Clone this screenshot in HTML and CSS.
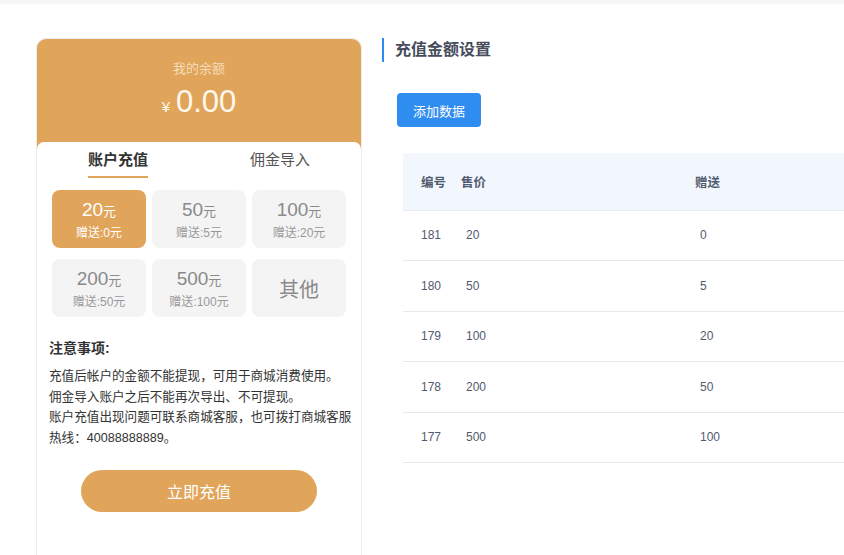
FILE: index.html
```html
<!DOCTYPE html>
<html lang="zh">
<head>
<meta charset="utf-8">
<title>充值金额设置</title>
<link rel="stylesheet" href="styles.css">
</head>
<body>
<div class="topbar"></div>
<div class="main">
  <div class="card">
    <div class="balance">
      <div class="balance-label">我的余额</div>
      <div class="balance-amount"><span class="yen">¥</span><span class="num">0.00</span></div>
    </div>
    <div class="panel">
      <div class="tabs">
        <div class="tab active"><span>账户充值</span></div>
        <div class="tab"><span>佣金导入</span></div>
      </div>
      <div class="amounts">
        <div class="amt selected"><div class="amt-main">20<small>元</small></div><div class="amt-sub">赠送:0元</div></div>
        <div class="amt"><div class="amt-main">50<small>元</small></div><div class="amt-sub">赠送:5元</div></div>
        <div class="amt"><div class="amt-main">100<small>元</small></div><div class="amt-sub">赠送:20元</div></div>
        <div class="amt"><div class="amt-main">200<small>元</small></div><div class="amt-sub">赠送:50元</div></div>
        <div class="amt"><div class="amt-main">500<small>元</small></div><div class="amt-sub">赠送:100元</div></div>
        <div class="amt other">其他</div>
      </div>
      <div class="notes">
        <div class="notes-title">注意事项:</div>
        <p>充值后帐户的金额不能提现，可用于商城消费使用。</p>
        <p>佣金导入账户之后不能再次导出、不可提现。</p>
        <p>账户充值出现问题可联系商城客服，也可拨打商城客服热线：40088888889。</p>
      </div>
      <div class="btn-wrap"><button class="recharge">立即充值</button></div>
    </div>
  </div>
  <div class="content">
    <div class="title">充值金额设置</div>
    <button class="add-btn">添加数据</button>
    <table class="grid">
      <colgroup><col class="c1"><col class="c2"><col class="c3"></colgroup>
      <thead>
        <tr><th class="h1">编号</th><th class="h2">售价</th><th class="h3">赠送</th></tr>
      </thead>
      <tbody>
        <tr><td class="d1">181</td><td class="d2">20</td><td class="d3">0</td></tr>
        <tr><td class="d1">180</td><td class="d2">50</td><td class="d3">5</td></tr>
        <tr><td class="d1">179</td><td class="d2">100</td><td class="d3">20</td></tr>
        <tr><td class="d1">178</td><td class="d2">200</td><td class="d3">50</td></tr>
        <tr><td class="d1">177</td><td class="d2">500</td><td class="d3">100</td></tr>
      </tbody>
    </table>
  </div>
</div>
</body>
</html>
```
FILE: styles.css
```css
html, body {
  margin: 0;
  padding: 0;
  overflow: hidden;
  background: #fff;
  font-family: "Liberation Sans", "Noto Sans CJK SC", sans-serif;
}
.topbar {
  height: 4px;
  background: #f5f6f8;
}
.main {
  display: flex;
  align-items: flex-start;
  padding: 34px 0 0 36px;
  gap: 20px;
}
.card {
  width: 326px;
  box-sizing: border-box;
  height: 540px;
  flex: none;
  border: 1px solid #ececec;
  border-radius: 10px;
  overflow: hidden;
  background: #fff;
}
.balance {
  background: #e0a55a;
  height: 112px;
  box-sizing: border-box;
  padding-top: 22px;
  text-align: center;
}
.balance-label {
  font-size: 13px;
  line-height: 16px;
  color: #f6dcb9;
}
.balance-amount {
  margin-top: 7px;
  line-height: 36px;
  color: #fff8ec;
}
.yen {
  font-size: 15px;
  margin-right: 6px;
}
.num {
  font-size: 31px;
}
.panel {
  margin-top: -9px;
  background: #fff;
  border-radius: 7px 7px 0 0;
}
.tabs {
  display: flex;
}
.tab {
  flex: 1;
  text-align: center;
  padding-top: 8px;
  font-size: 15px;
  line-height: 20px;
  color: #555;
}
.tab span {
  display: inline-block;
  padding-bottom: 6px;
  border-bottom: 2px solid transparent;
}
.tab.active span {
  color: #333;
  font-weight: bold;
  border-bottom-color: #e0a55a;
}
.amounts {
  display: grid;
  grid-template-columns: repeat(3, 1fr);
  gap: 11px 6px;
  padding: 0 15px;
  margin-top: 12px;
}
.amt {
  height: 58px;
  border-radius: 8px;
  background: #f4f4f4;
  display: flex;
  flex-direction: column;
  align-items: center;
  justify-content: center;
  gap: 3px;
}
.amt-main {
  font-size: 19px;
  line-height: 22px;
  color: #8a8a8a;
}
.amt-main small {
  font-size: 13px;
}
.amt-sub {
  font-size: 12px;
  line-height: 14px;
  color: #999;
}
.amt.selected {
  background: #e0a55a;
}
.amt.selected .amt-main,
.amt.selected .amt-sub {
  color: #fff;
}
.amt.other {
  font-size: 20px;
  color: #8a8a8a;
}
.notes {
  padding: 0 4px 0 12px;
  margin-top: 21px;
  color: #333;
}
.notes-title {
  font-size: 14px;
  font-weight: bold;
  line-height: 20px;
  margin-bottom: 8px;
}
.notes p {
  margin: 0;
  font-size: 12.6px;
  line-height: 20.6px;
}
.btn-wrap {
  display: flex;
  justify-content: center;
  margin-top: 22px;
}
.recharge {
  width: 236px;
  height: 42px;
  border: none;
  border-radius: 21px;
  background: #e0a55a;
  color: #fff;
  font-family: inherit;
  font-size: 16px;
  padding: 0;
}
.content {
  flex: 1;
  min-width: 0;
}
.title {
  border-left: 2px solid #2d8cf0;
  height: 24px;
  line-height: 24px;
  padding-left: 11px;
  font-size: 16px;
  font-weight: bold;
  color: #464c5b;
}
.add-btn {
  display: block;
  margin: 31px 0 0 15px;
  width: 84px;
  height: 34px;
  border: none;
  border-radius: 4px;
  background: #2f8cf0;
  color: #fff;
  font-family: inherit;
  font-size: 13px;
  padding: 0;
}
.grid {
  margin: 26px 0 0 21px;
  width: calc(100% - 21px);
  border-collapse: collapse;
  table-layout: fixed;
  font-size: 12px;
  color: #515a6e;
}
.c1 { width: 50px; }
.c2 { width: 228px; }
.grid th {
  height: 57px;
  box-sizing: border-box;
  background: #f2f7fd;
  border-bottom: 1px solid #e8eaec;
  text-align: left;
  font-size: 12.5px;
  font-weight: bold;
  padding: 0;
}
.grid td {
  height: 50.5px;
  box-sizing: border-box;
  border-bottom: 1px solid #e8eaec;
  padding: 0;
}
.h1, .d1 { padding-left: 18px !important; }
.h2 { padding-left: 8px !important; }
.d2 { padding-left: 13px !important; }
.h3 { padding-left: 14px !important; }
.d3 { padding-left: 19px !important; }
```
